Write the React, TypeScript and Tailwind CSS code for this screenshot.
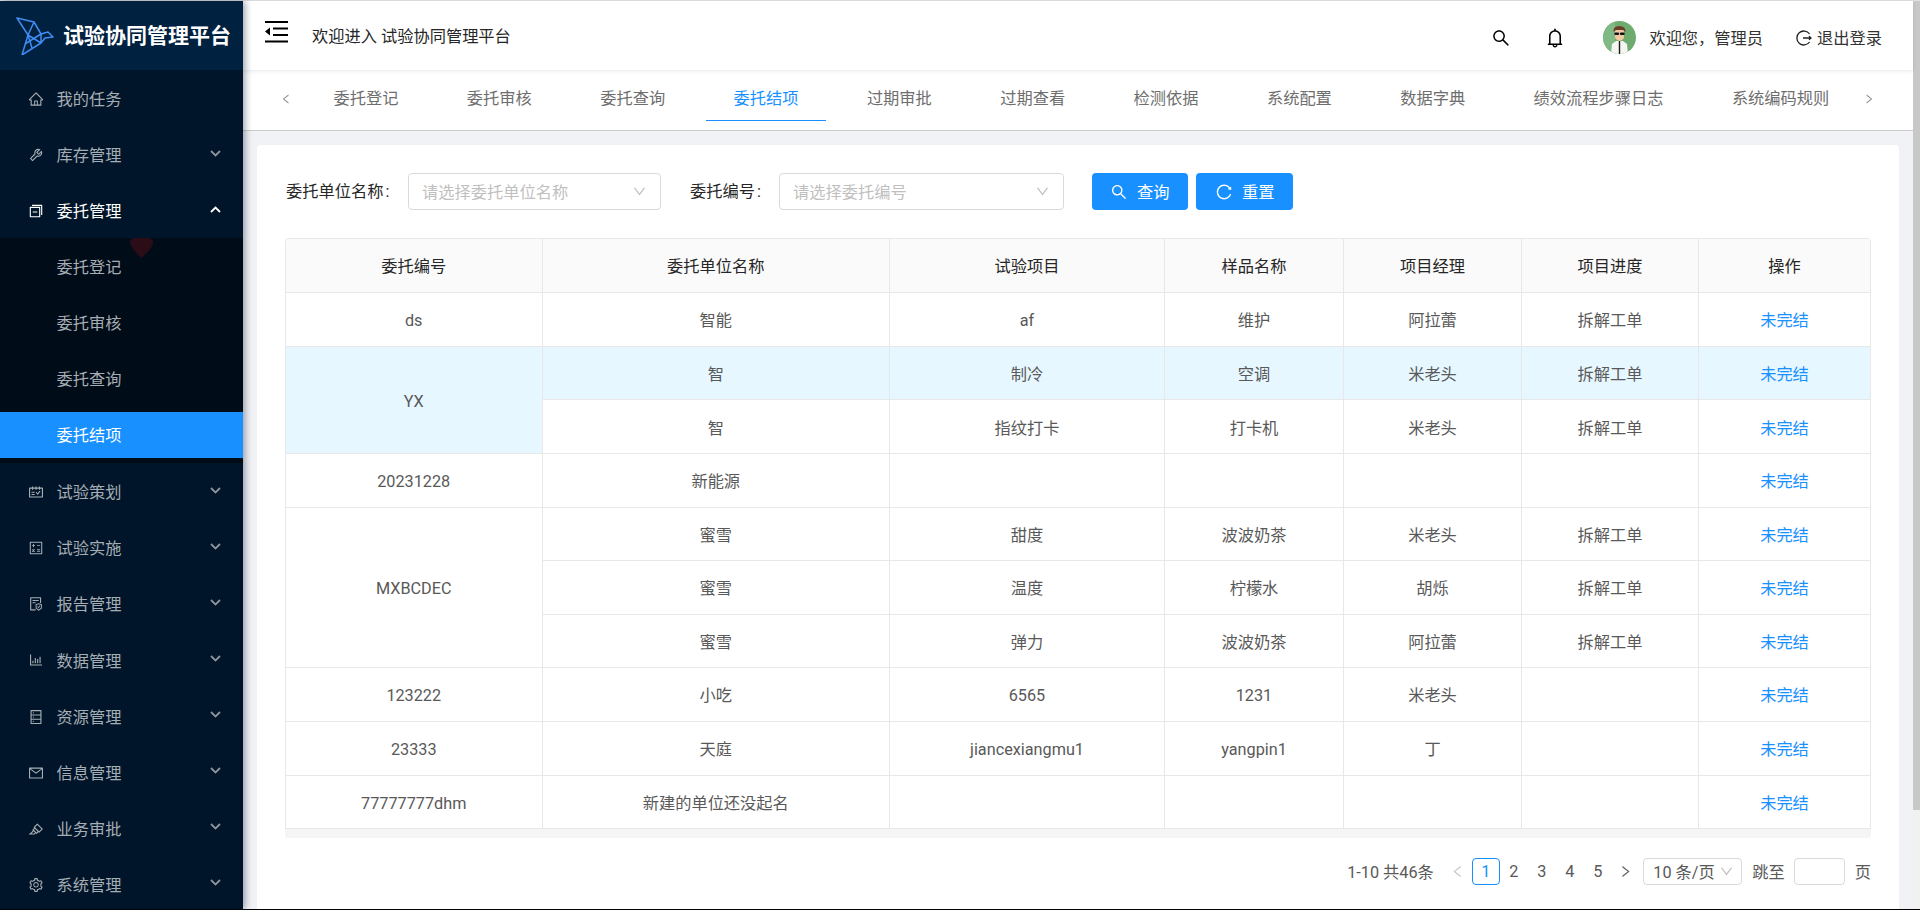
import {
  AiOutlineBarChart,
  AiOutlineBell,
  AiOutlineCalculator,
  AiOutlineDatabase,
  AiOutlineDown,
  AiOutlineFileProtect,
  AiOutlineHighlight,
  AiOutlineHome,
  AiOutlineLeft,
  AiOutlineMail,
  AiOutlineReload,
  AiOutlineRight,
  AiOutlineSchedule,
  AiOutlineSearch,
  AiOutlineSetting,
  AiOutlineSwitcher,
  AiOutlineTool,
} from 'react-icons/ai';
import type { ReactNode } from 'react';

const TABS = ['委托登记', '委托审核', '委托查询', '委托结项', '过期审批', '过期查看', '检测依据', '系统配置', '数据字典', '绩效流程步骤日志', '系统编码规则'];

const COL_WIDTHS = ['w-[256.5px]', 'w-[347.5px]', 'w-[275px]', 'w-[179px]', 'w-[178px]', 'w-[177px]', 'w-[172px]'];
const HEADERS = ['委托编号', '委托单位名称', '试验项目', '样品名称', '项目经理', '项目进度', '操作'];

type Row = { id?: string; span?: number; unit: string; item: string; sample: string; manager: string; progress: string; hover?: boolean };

const ROWS: Row[] = [
  { id: 'ds', unit: '智能', item: 'af', sample: '维护', manager: '阿拉蕾', progress: '拆解工单' },
  { id: 'YX', span: 2, unit: '智', item: '制冷', sample: '空调', manager: '米老头', progress: '拆解工单', hover: true },
  { unit: '智', item: '指纹打卡', sample: '打卡机', manager: '米老头', progress: '拆解工单' },
  { id: '20231228', unit: '新能源', item: '', sample: '', manager: '', progress: '' },
  { id: 'MXBCDEC', span: 3, unit: '蜜雪', item: '甜度', sample: '波波奶茶', manager: '米老头', progress: '拆解工单' },
  { unit: '蜜雪', item: '温度', sample: '柠檬水', manager: '胡烁', progress: '拆解工单' },
  { unit: '蜜雪', item: '弹力', sample: '波波奶茶', manager: '阿拉蕾', progress: '拆解工单' },
  { id: '123222', unit: '小吃', item: '6565', sample: '1231', manager: '米老头', progress: '' },
  { id: '23333', unit: '天庭', item: 'jiancexiangmu1', sample: 'yangpin1', manager: '丁', progress: '' },
  { id: '77777777dhm', unit: '新建的单位还没起名', item: '', sample: '', manager: '', progress: '' },
];

function Chevron({ up }: { up?: boolean }) {
  return (
    <svg width="11" height="7" viewBox="0 0 11 7" className="mb-[4px] mr-[1px]">
      <polyline points={up ? '1,6 5.5,1.5 10,6' : '1,1 5.5,5.5 10,1'} fill="none" stroke={up ? '#ffffff' : '#8b939c'} strokeWidth="1.8" />
    </svg>
  );
}

function MenuItem({ icon, label, active, arrow }: { icon: ReactNode; label: string; active?: boolean; arrow?: 'up' | 'down' }) {
  return (
    <div className={`flex h-[46px] items-center pl-[28px] pr-[21px] ${active ? 'text-white' : 'text-[#a6adb4]'}`}>
      <span className="flex w-[16px] justify-center text-[20px]">{icon}</span>
      <span className="ml-[12.5px] mt-[2.4px] flex-1 text-[16.24px] leading-[24px]">{label}</span>
      {arrow && <Chevron up={arrow === 'up'} />}
    </div>
  );
}

function SubItem({ label, selected }: { label: string; selected?: boolean }) {
  return (
    <div className={`flex h-[46px] items-center pl-[56.5px] text-[16.24px] ${selected ? 'bg-[#1890ff] pt-[3px] text-white' : 'pt-[2.4px] text-[#a6adb4]'}`}>
      {label}
    </div>
  );
}

function Logo() {
  return (
    <svg width="38" height="38" viewBox="0 0 38 38" fill="none" stroke="#3f8df2" strokeWidth="1.5" strokeLinejoin="round" className="ml-[16px] mt-[1px] shrink-0">
      <path d="M1 1 L18 5 L25 17 L32 15 L37 20 L29 21 L25 26 L6 38 L12 18 Z" />
      <path d="M18 5 L12 18 L16 31" />
      <path d="M12 18 L25 26 M9 27 L25 17 M25 17 L25 26" />
    </svg>
  );
}

function Avatar() {
  return (
    <svg width="33" height="33" viewBox="0 0 33 33" className="shrink-0">
      <defs>
        <clipPath id="av">
          <circle cx="16.5" cy="16.5" r="16.5" />
        </clipPath>
      </defs>
      <g clipPath="url(#av)">
        <rect width="33" height="33" fill="#6dab6f" />
        <rect width="12" height="33" fill="#80b983" />
        <path d="M8 33 L9 23 L13 20 L20 20 L24 23 L25 33 Z" fill="#f4f6f2" />
        <rect x="15.8" y="20" width="1.4" height="13" fill="#1a1a1a" />
        <path d="M12 9 L21 9 L21 17 Q16.5 23 12 17 Z" fill="#f0c8a4" />
        <path d="M10.5 11 Q10 5 16 5 Q23 5 22.5 11 L20 9 L13 9 Z" fill="#6b3d2a" />
        <rect x="11.5" y="11.5" width="4.5" height="2.6" rx="0.8" fill="#111" />
        <rect x="17" y="11.5" width="4.5" height="2.6" rx="0.8" fill="#111" />
      </g>
    </svg>
  );
}

function Sidebar() {
  return (
    <aside className="relative z-10 flex w-[243px] shrink-0 flex-col bg-[#001529] shadow-[2px_0_7px_rgba(0,21,41,0.4)]">
      <div className="flex h-[69px] items-center bg-[#002140]">
        <Logo />
        <span className="ml-[9px] whitespace-nowrap text-[21px] font-bold leading-[28px] text-white">试验协同管理平台</span>
      </div>
      <div className="flex flex-col gap-[10px] pt-[6px]">
        <MenuItem icon={<AiOutlineHome />} label="我的任务" />
        <MenuItem icon={<AiOutlineTool />} label="库存管理" arrow="down" />
        <MenuItem icon={<AiOutlineSwitcher />} label="委托管理" active arrow="up" />
      </div>
      <div className="relative mt-[4px] flex h-[225px] flex-col gap-[10px] bg-[#000c17] pt-[6px]">
        <svg width="23" height="20" viewBox="0 0 23 20" className="absolute left-[130px] top-0">
          <path d="M0 4 Q0 0 5 0 L18 0 Q23 0 23 5 Q23 10 11.5 20 Q0 10 0 4 Z" fill="#2a0d16" />
        </svg>
        <SubItem label="委托登记" />
        <SubItem label="委托审核" />
        <SubItem label="委托查询" />
        <SubItem label="委托结项" selected />
      </div>
      <div className="flex flex-col gap-[10.15px] pt-[6px]">
        <MenuItem icon={<AiOutlineSchedule />} label="试验策划" arrow="down" />
        <MenuItem icon={<AiOutlineCalculator />} label="试验实施" arrow="down" />
        <MenuItem icon={<AiOutlineFileProtect />} label="报告管理" arrow="down" />
        <MenuItem icon={<AiOutlineBarChart />} label="数据管理" arrow="down" />
        <MenuItem icon={<AiOutlineDatabase />} label="资源管理" arrow="down" />
        <MenuItem icon={<AiOutlineMail />} label="信息管理" arrow="down" />
        <MenuItem icon={<AiOutlineHighlight />} label="业务审批" arrow="down" />
        <MenuItem icon={<AiOutlineSetting />} label="系统管理" arrow="down" />
      </div>
    </aside>
  );
}

function Header() {
  return (
    <header className="relative z-[5] flex h-[69px] shrink-0 items-center bg-white pl-[22px] pr-[31px] shadow-[0_1px_4px_rgba(0,21,41,0.1)]">
      <svg width="23" height="22" viewBox="0 0 23 22" className="mb-[8px] shrink-0">
        <rect x="0" y="0" width="23" height="2" fill="#000" />
        <rect x="8" y="6.5" width="15" height="2" fill="#000" />
        <rect x="8" y="13" width="15" height="2" fill="#000" />
        <rect x="0" y="19.5" width="23" height="2" fill="#000" />
        <polygon points="0,10.5 5,6.5 5,14.5" fill="#000" />
      </svg>
      <span className="ml-[24px] mt-[2px] flex-1 text-[16.24px] leading-[24px] text-[#262626]">欢迎进入&nbsp;试验协同管理平台</span>
      <AiOutlineSearch className="mt-[4px] text-[20px] text-black" />
      <AiOutlineBell className="ml-[33px] mt-[4px] text-[22px] text-black" />
      <div className="ml-[37px] mt-[4px] flex items-center">
        <Avatar />
        <span className="ml-[13px] mt-[2px] text-[16.24px] leading-[24px] text-[#333]">欢迎您，管理员</span>
      </div>
      <svg width="16" height="16" viewBox="0 0 16 16" fill="none" stroke="#222" strokeWidth="1.3" className="ml-[33px] mt-[4px]">
        <path d="M13.6 4 A7 7 0 1 0 13.6 12" />
        <path d="M7 8 L15 8 M13 6.2 L15 8 L13 9.8" />
      </svg>
      <span className="ml-[5px] mt-[6px] text-[16.24px] leading-[24px] text-[#333]">退出登录</span>
    </header>
  );
}

function TabBar() {
  return (
    <div className="flex h-[61px] shrink-0 items-start border-b border-[#ccc] bg-white pl-[37px]">
      <AiOutlineLeft className="mt-[22px] w-[12px] shrink-0 text-[14px] text-[#888]" />
      <div className="ml-[13.5px] flex gap-[12.4px]">
        {TABS.map((tab) => (
          <div
            key={tab}
            className={`mt-[6px] flex h-[45px] items-center whitespace-nowrap border-b-[1.5px] px-[28px] pt-[2px] text-[16.24px] ${
              tab === '委托结项' ? 'border-[#1890ff] text-[#1890ff]' : 'border-transparent text-[#6e6e6e]'
            }`}
          >
            {tab}
          </div>
        ))}
      </div>
      <AiOutlineRight className="ml-[6px] mt-[22px] w-[12px] text-[14px] text-[#888]" />
    </div>
  );
}

function FakeSelect({ placeholder, className }: { placeholder: string; className: string }) {
  return (
    <div className={`flex h-[37px] items-center justify-between rounded-[4px] border border-[#d9d9d9] bg-white pl-[13px] pr-[13px] ${className}`}>
      <span className="mt-[4px] text-[16.24px] text-[#bfbfbf]">{placeholder}</span>
      <AiOutlineDown className="text-[15px] text-[#bfbfbf]" />
    </div>
  );
}

function Filters() {
  return (
    <div className="flex items-center">
      <span className="ml-[1px] mt-[2px] w-[122px] text-[16.24px] text-[#262626]">委托单位名称<span className="ml-[2px]">:</span></span>
      <FakeSelect placeholder="请选择委托单位名称" className="w-[253px]" />
      <span className="ml-[29px] mt-[2px] w-[89px] text-[16.24px] text-[#262626]">委托编号<span className="ml-[2px]">:</span></span>
      <FakeSelect placeholder="请选择委托编号" className="w-[285px]" />
      <button type="button" className="ml-[28px] flex h-[37px] w-[96px] items-center rounded-[4px] bg-[#1890ff] pl-[18px] text-[16.24px] text-white">
        <AiOutlineSearch className="text-[18px]" />
        <span className="ml-[9px] mt-[4px]">查询</span>
      </button>
      <button type="button" className="ml-[8px] flex h-[37px] w-[97px] items-center rounded-[4px] bg-[#1890ff] pl-[19px] text-[16.24px] text-white">
        <AiOutlineReload className="text-[18px]" />
        <span className="ml-[9px] mt-[4px]">重置</span>
      </button>
    </div>
  );
}

function DataTable() {
  const cell = 'border-b border-r border-[#e8e8e8] pt-[4px] text-center align-middle text-[16.24px] font-normal';
  return (
    <div className="mt-[28px] w-[1586px]">
      <div className="overflow-hidden rounded-t-[4px] border-l border-t border-[#e8e8e8]">
        <table className="w-[1585px] table-fixed border-separate border-spacing-0">
          <colgroup>
            {COL_WIDTHS.map((w) => (
              <col key={w} className={w} />
            ))}
          </colgroup>
          <thead>
            <tr className="h-[54.2px] bg-[#fafafa]">
              {HEADERS.map((h) => (
                <th key={h} className={`${cell} text-[#262626]`}>{h}</th>
              ))}
            </tr>
          </thead>
          <tbody>
            {ROWS.map((row, i) => {
              const bg = row.hover ? 'bg-[#e6f7ff]' : '';
              return (
                <tr key={i} className="h-[53.6px] text-[#595959]">
                  {row.id && (
                    <td rowSpan={row.span} className={`${cell} ${bg}`}>{row.id}</td>
                  )}
                  <td className={`${cell} ${bg}`}>{row.unit}</td>
                  <td className={`${cell} ${bg}`}>{row.item}</td>
                  <td className={`${cell} ${bg}`}>{row.sample}</td>
                  <td className={`${cell} ${bg}`}>{row.manager}</td>
                  <td className={`${cell} ${bg}`}>{row.progress}</td>
                  <td className={`${cell} ${bg} text-[#1890ff]`}>未完结</td>
                </tr>
              );
            })}
          </tbody>
        </table>
      </div>
      <div className="h-[9px] rounded-b-[3px] bg-[#f5f5f5]" />
    </div>
  );
}

function Pagination() {
  const page = 'flex h-[27px] w-[28px] items-center justify-center text-[16.24px]';
  return (
    <div className="mt-[20px] flex w-[1586px] items-center justify-end text-[16.24px] leading-[24px] text-[#595959]">
      <span className="mr-[10px] mt-[2px]">1-10 共46条</span>
      <div className={`${page} text-[#c4c4c4]`}>
        <AiOutlineLeft className="text-[15px]" />
      </div>
      <div className={`${page} rounded-[4px] border border-[#1890ff] text-[#1890ff]`}>1</div>
      {[2, 3, 4, 5].map((n) => (
        <div key={n} className={page}>{n}</div>
      ))}
      <div className={page}>
        <AiOutlineRight className="text-[15px]" />
      </div>
      <div className="ml-[3.5px] flex h-[27px] w-[99px] items-center justify-between rounded-[4px] border border-[#d9d9d9] pl-[9px] pr-[7px]">
        <span className="mt-[2px]">10 条/页</span>
        <AiOutlineDown className="text-[15px] text-[#bfbfbf]" />
      </div>
      <span className="ml-[10px] mt-[2px]">跳至</span>
      <div className="ml-[9px] h-[27px] w-[51px] rounded-[4px] border border-[#d9d9d9]" />
      <span className="ml-[10px] mt-[2px]">页</span>
    </div>
  );
}

export default function App() {
  return (
    <div className="flex h-[910px] w-full flex-col overflow-hidden bg-[#f0f2f5] font-['Roboto','Noto_Sans_CJK_SC',sans-serif]">
      <div className="h-px shrink-0 bg-[#e0e0e0]" />
      <div className="flex min-h-0 flex-1">
        <Sidebar />
        <div className="flex min-w-0 flex-1 flex-col">
          <Header />
          <TabBar />
          <div className="flex-1 pl-[14px] pr-[14px] pt-[14px]">
            <div className="h-full rounded-t-[4px] bg-white pl-[28px] pt-[28px]">
              <Filters />
              <DataTable />
              <Pagination />
            </div>
          </div>
        </div>
        <div className="flex w-[7px] shrink-0 flex-col bg-[#f1f1f1]">
          <div className="h-[809px] bg-[#c8c8c8]" />
        </div>
      </div>
      <div className="h-px shrink-0 bg-black" />
    </div>
  );
}
